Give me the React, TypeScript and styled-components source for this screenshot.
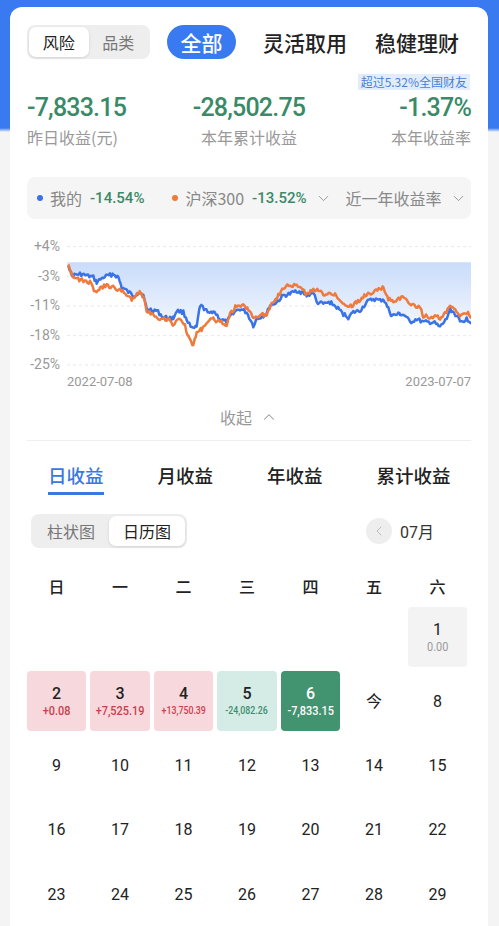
import React from 'react';
import styled, { createGlobalStyle } from 'styled-components';
import { ChevronDown, ChevronUp, ChevronLeft } from 'lucide-react';

const CJK = `"Noto Sans CJK SC", "Noto Sans", sans-serif`;
const NUM = `Roboto, "Noto Sans CJK SC", sans-serif`;
const GREEN = '#3a8a68';
const BLUE = '#3a7af0';

const GlobalStyle = createGlobalStyle`
  html, body {
    margin: 0;
    padding: 0;
  }
  body {
    font-family: ${CJK};
    background: linear-gradient(${BLUE} 0, ${BLUE} 128px, #f4f4f4 132px);
    overflow: hidden;
  }
`;

type Pt = [number, number];

// keypoints traced in chart coordinates (viewBox units, 3x of screen px)
const blueKeys: Pt[] = [
    [205, 315], [215, 350], [240, 345], [280, 355], [290, 370], [310, 355], [340, 345], [355, 355],
    [365, 385], [400, 410], [420, 400], [430, 410], [440, 450], [470, 455], [490, 475], [520, 478],
    [530, 455], [550, 460], [560, 480], [575, 510], [590, 505], [600, 440], [615, 450], [625, 465],
    [640, 455], [660, 480], [680, 490], [700, 460], [720, 450], [740, 460], [760, 500], [770, 480],
    [800, 465], [810, 440], [830, 430], [850, 410], [870, 405], [890, 395], [905, 400], [920, 410],
    [940, 400], [950, 430], [970, 435], [990, 430], [1010, 445], [1030, 465], [1045, 475], [1060, 460],
    [1080, 455], [1100, 430], [1120, 420], [1140, 425], [1150, 420], [1165, 450], [1175, 470],
    [1200, 465], [1215, 470], [1230, 490], [1250, 480], [1270, 490], [1300, 490], [1320, 505],
    [1340, 480], [1350, 450], [1370, 470], [1380, 490], [1400, 480], [1413, 488],
];

const orangeKeys: Pt[] = [
    [205, 312], [215, 345], [230, 360], [250, 365], [270, 370], [290, 405], [300, 385], [320, 380],
    [340, 385], [360, 395], [380, 405], [395, 420], [420, 400], [430, 410], [440, 455], [460, 465],
    [480, 480], [510, 480], [520, 500], [540, 475], [555, 500], [565, 535], [580, 560], [590, 520],
    [605, 510], [620, 490], [640, 480], [660, 490], [680, 495], [690, 465], [710, 440], [730, 440],
    [745, 450], [760, 475], [780, 470], [800, 465], [815, 430], [835, 410], [850, 385], [870, 380],
    [890, 380], [905, 390], [920, 405], [940, 395], [955, 390], [970, 410], [990, 400], [1005, 405],
    [1020, 425], [1040, 440], [1055, 440], [1070, 430], [1085, 420], [1100, 405], [1120, 400],
    [1140, 390], [1150, 385], [1165, 420], [1180, 425], [1210, 415], [1225, 430], [1240, 440],
    [1260, 445], [1270, 470], [1290, 475], [1305, 470], [1320, 480], [1335, 465], [1350, 440],
    [1365, 455], [1380, 470], [1400, 460], [1413, 475],
];

function buildLine(keys: Pt[], seed: number): Pt[] {
    let s = seed;
    const rnd = () => {
        s = (s * 9301 + 49297) % 233280;
        return s / 233280;
    };
    const out: Pt[] = [];
    for (let i = 0; i < keys.length - 1; i++) {
        const [x0, y0] = keys[i];
        const [x1, y1] = keys[i + 1];
        for (let x = x0; x < x1; x += 4) {
            const t = (x - x0) / (x1 - x0);
            const y = y0 + (y1 - y0) * t + (rnd() - 0.5) * 12;
            out.push([x, y]);
        }
    }
    out.push(keys[keys.length - 1]);
    return out;
}

const bluePts = buildLine(blueKeys, 17);
const orangePts = buildLine(orangeKeys, 91);
const toStr = (p: Pt[]) => p.map(([x, y]) => `${x},${y.toFixed(1)}`).join(' ');
const fillStr = `201,310 1413,310 ${toStr([...bluePts].reverse())}`;

const gridYs = [263, 352, 441, 530, 618];
const yLabels = ['+4%', '-3%', '-11%', '-18%', '-25%'];

type Tone = 'none' | 'gray' | 'red' | 'mint' | 'green';
interface Day {
    d: string;
    v?: string;
    tone?: Tone;
    small?: boolean;
}

const weeks: (Day | null)[][] = [
    [null, null, null, null, null, null, { d: '1', v: '0.00', tone: 'gray' }],
    [
        { d: '2', v: '+0.08', tone: 'red' },
        { d: '3', v: '+7,525.19', tone: 'red' },
        { d: '4', v: '+13,750.39', tone: 'red', small: true },
        { d: '5', v: '-24,082.26', tone: 'mint', small: true },
        { d: '6', v: '-7,833.15', tone: 'green' },
        { d: '今' },
        { d: '8' },
    ],
    ['9', '10', '11', '12', '13', '14', '15'].map((d) => ({ d })),
    ['16', '17', '18', '19', '20', '21', '22'].map((d) => ({ d })),
    ['23', '24', '25', '26', '27', '28', '29'].map((d) => ({ d })),
];

export default function App() {
    return (
        <>
            <GlobalStyle />
            <Card>
                <TopRow>
                    <Segment>
                        <SegItem $active>风险</SegItem>
                        <SegItem>品类</SegItem>
                    </Segment>
                    <AllPill>全部</AllPill>
                    <TopTab $gap={27}>灵活取用</TopTab>
                    <TopTab $gap={28}>稳健理财</TopTab>
                </TopRow>

                <BadgeRow>
                    <Badge>超过5.32%全国财友</Badge>
                </BadgeRow>

                <Stats>
                    <Stat $align="left">
                        <StatValue>-7,833.15</StatValue>
                        <StatLabel>昨日收益(元)</StatLabel>
                    </Stat>
                    <Stat $align="center">
                        <StatValue>-28,502.75</StatValue>
                        <StatLabel>本年累计收益</StatLabel>
                    </Stat>
                    <Stat $align="right">
                        <StatValue>-1.37%</StatValue>
                        <StatLabel>本年收益率</StatLabel>
                    </Stat>
                </Stats>

                <Legend>
                    <Dot $color="#3a72e8" />
                    <LegendName>我的</LegendName>
                    <LegendValue>-14.54%</LegendValue>
                    <Dot $color="#f07a3a" style={{ marginLeft: 20 }} />
                    <LegendName>沪深300</LegendName>
                    <LegendValue>-13.52%</LegendValue>
                    <ChevronDown size={17} strokeWidth={1.4} color="#999" />
                    <LegendName style={{ marginLeft: 14 }}>近一年收益率</LegendName>
                    <ChevronDown size={17} strokeWidth={1.4} color="#999" />
                </Legend>

                <ChartRow>
                    <YAxis>
                        {yLabels.map((l) => (
                            <YLabel key={l}>{l}</YLabel>
                        ))}
                    </YAxis>
                    <ChartSvg viewBox="201 219 1212 426" preserveAspectRatio="none">
                        <defs>
                            <linearGradient id="area" x1="0" y1="0" x2="0" y2="1">
                                <stop offset="0%" stopColor="#c9dcfa" />
                                <stop offset="100%" stopColor="#f3f7fe" />
                            </linearGradient>
                        </defs>
                        {gridYs.map((y) => (
                            <line key={y} x1={201} x2={1413} y1={y} y2={y} stroke="#e8e8e8" strokeWidth={3} strokeDasharray="9 9" />
                        ))}
                        <polygon points={fillStr} fill="url(#area)" />
                        <polyline points={toStr(bluePts)} fill="none" stroke="#3a72e8" strokeWidth={7.5} strokeLinejoin="round" />
                        <polyline points={toStr(orangePts)} fill="none" stroke="#ef7a3c" strokeWidth={7.5} strokeLinejoin="round" />
                    </ChartSvg>
                </ChartRow>
                <DateRow>
                    <span>2022-07-08</span>
                    <span>2023-07-07</span>
                </DateRow>

                <Collapse>
                    收起 <ChevronUp size={18} strokeWidth={1.4} color="#999" />
                </Collapse>

                <Divider />

                <Tabs>
                    <Tab $active>日收益</Tab>
                    <Tab>月收益</Tab>
                    <Tab>年收益</Tab>
                    <Tab>累计收益</Tab>
                </Tabs>

                <ToolRow>
                    <ViewSegment>
                        <ViewItem>柱状图</ViewItem>
                        <ViewItem $active>日历图</ViewItem>
                    </ViewSegment>
                    <MonthPicker>
                        <PrevBtn>
                            <ChevronLeft size={16} strokeWidth={1.5} color="#bbb" />
                        </PrevBtn>
                        <MonthText>07月</MonthText>
                    </MonthPicker>
                </ToolRow>

                <WeekHead>
                    {['日', '一', '二', '三', '四', '五', '六'].map((w) => (
                        <span key={w}>{w}</span>
                    ))}
                </WeekHead>

                <Calendar>
                    {weeks.flat().map((day, i) =>
                        day ? (
                            <DayCell key={i} $tone={day.tone || 'none'}>
                                <DayNum $tone={day.tone || 'none'}>{day.d}</DayNum>
                                {day.v && (
                                    <DayValue $tone={day.tone || 'none'} $small={!!day.small}>
                                        {day.v}
                                    </DayValue>
                                )}
                            </DayCell>
                        ) : (
                            <div key={i} />
                        ),
                    )}
                </Calendar>
            </Card>
        </>
    );
}

const Card = styled.div`
    margin: 7px 11px 0 10px;
    padding: 18px 17px 40px;
    background: #fff;
    border-radius: 12px 12px 0 0;
    min-height: 1000px;
`;

const TopRow = styled.div`
    display: flex;
    align-items: center;
    height: 34px;
`;

const Segment = styled.div`
    display: flex;
    width: 123px;
    height: 34px;
    box-sizing: border-box;
    padding: 2px;
    background: #eeeeee;
    border-radius: 8px;
`;

const SegItem = styled.div<{ $active?: boolean }>`
    flex: 1;
    display: flex;
    align-items: center;
    justify-content: center;
    font-size: 16px;
    border-radius: 7px;
    color: ${(p) => (p.$active ? '#222' : '#777')};
    background: ${(p) => (p.$active ? '#fff' : 'transparent')};
    box-shadow: ${(p) => (p.$active ? '0 1px 3px rgba(0,0,0,0.12)' : 'none')};
`;

const AllPill = styled.div`
    margin-left: 17px;
    width: 69px;
    height: 34px;
    border-radius: 17px;
    background: ${BLUE};
    color: #fff;
    font-size: 21px;
    font-weight: 500;
    display: flex;
    align-items: center;
    justify-content: center;
`;

const TopTab = styled.div<{ $gap: number }>`
    margin-left: ${(p) => p.$gap}px;
    font-size: 21px;
    font-weight: 500;
    color: #222;
`;

const BadgeRow = styled.div`
    display: flex;
    justify-content: flex-end;
    margin-top: 15px;
`;

const Badge = styled.div`
    background: #e2edfc;
    color: #4a7fd8;
    font-size: 12px;
    line-height: 16px;
    padding: 0 3px;
    margin-right: 1px;
`;

const Stats = styled.div`
    display: grid;
    grid-template-columns: 1fr 1fr 1fr;
    margin-top: 3px;
`;

const Stat = styled.div<{ $align: 'left' | 'center' | 'right' }>`
    display: flex;
    flex-direction: column;
    align-items: ${(p) => (p.$align === 'left' ? 'flex-start' : p.$align === 'right' ? 'flex-end' : 'center')};
`;

const StatValue = styled.div`
    font-family: ${NUM};
    font-size: 25px;
    font-weight: 500;
    line-height: 30px;
    letter-spacing: -0.8px;
    color: ${GREEN};
`;

const StatLabel = styled.div`
    font-size: 16px;
    line-height: 22px;
    margin-top: 3px;
    color: #999;
`;

const Legend = styled.div`
    margin-top: 29px;
    height: 42px;
    display: flex;
    align-items: center;
    padding-left: 10px;
    background: #f5f5f5;
    border-radius: 8px;
    font-size: 16px;
`;

const Dot = styled.span<{ $color: string }>`
    width: 6px;
    height: 6px;
    border-radius: 50%;
    background: ${(p) => p.$color};
    margin-right: 7px;
`;

const LegendName = styled.span`
    color: #888;
    margin-right: 8px;
`;

const LegendValue = styled.span`
    font-family: ${NUM};
    font-weight: 500;
    font-size: 15px;
    color: ${GREEN};
    margin-right: 8px;
`;

const ChartRow = styled.div`
    display: flex;
    margin-top: 13px;
    height: 142px;
`;

const YAxis = styled.div`
    width: 40px;
    display: flex;
    flex-direction: column;
`;

const YLabel = styled.div`
    height: 29.6px;
    line-height: 29.6px;
    text-align: right;
    padding-right: 7px;
    font-family: ${NUM};
    font-size: 14px;
    color: #999;
`;

const ChartSvg = styled.svg`
    width: 404px;
    height: 142px;
    display: block;
`;

const DateRow = styled.div`
    display: flex;
    justify-content: space-between;
    padding-left: 40px;
    font-family: ${NUM};
    font-size: 13px;
    line-height: 16px;
    color: #999;
`;

const Collapse = styled.div`
    margin-top: 15px;
    display: flex;
    align-items: center;
    justify-content: center;
    gap: 8px;
    font-size: 16px;
    line-height: 24px;
    color: #999;
`;

const Divider = styled.div`
    margin-top: 11px;
    height: 1px;
    background: #efefef;
`;

const Tabs = styled.div`
    display: flex;
    gap: 54px;
    padding-left: 21px;
    margin-top: 23px;
`;

const Tab = styled.div<{ $active?: boolean }>`
    font-size: 18.5px;
    line-height: 22px;
    font-weight: 500;
    color: ${(p) => (p.$active ? '#3a78e0' : '#222')};
    padding-bottom: 6px;
    border-bottom: 3px solid ${(p) => (p.$active ? '#3a78e0' : 'transparent')};
`;

const ToolRow = styled.div`
    display: flex;
    justify-content: space-between;
    align-items: center;
    margin-top: 19px;
    padding-left: 4px;
    padding-right: 37px;
`;

const ViewSegment = styled.div`
    display: flex;
    width: 156px;
    height: 34px;
    box-sizing: border-box;
    padding: 2px;
    background: #eeeeee;
    border-radius: 8px;
`;

const ViewItem = styled.div<{ $active?: boolean }>`
    flex: 1;
    display: flex;
    align-items: center;
    justify-content: center;
    font-size: 16px;
    border-radius: 7px;
    color: ${(p) => (p.$active ? '#222' : '#777')};
    background: ${(p) => (p.$active ? '#fff' : 'transparent')};
    box-shadow: ${(p) => (p.$active ? '0 1px 3px rgba(0,0,0,0.12)' : 'none')};
`;

const MonthPicker = styled.div`
    display: flex;
    align-items: center;
    gap: 8px;
`;

const PrevBtn = styled.div`
    width: 26px;
    height: 26px;
    border-radius: 50%;
    background: #eeeeee;
    display: flex;
    align-items: center;
    justify-content: center;
`;

const MonthText = styled.span`
    font-family: ${NUM};
    font-size: 16px;
    color: #333;
`;

const WeekHead = styled.div`
    width: 440px;
    margin-top: 27px;
    display: grid;
    grid-template-columns: repeat(7, 1fr);
    column-gap: 4.3px;
    text-align: center;
    font-size: 16px;
    line-height: 22px;
    font-weight: 500;
    color: #222;
`;

const Calendar = styled.div`
    width: 440px;
    margin-top: 10px;
    display: grid;
    grid-template-columns: repeat(7, 1fr);
    grid-auto-rows: 60px;
    column-gap: 4.3px;
    row-gap: 4.3px;
`;

const toneBg: Record<Tone, string> = {
    none: 'transparent',
    gray: '#f3f3f3',
    red: '#f7d8dc',
    mint: '#d4ece5',
    green: '#42936f',
};

const toneText: Record<Tone, string> = {
    none: '#222',
    gray: '#999',
    red: '#c8404e',
    mint: '#3e8c6f',
    green: '#fff',
};

const DayCell = styled.div<{ $tone: Tone }>`
    border-radius: 4px;
    background: ${(p) => toneBg[p.$tone]};
    display: flex;
    flex-direction: column;
    align-items: center;
    justify-content: center;
    overflow: hidden;
`;

const DayNum = styled.div<{ $tone: Tone }>`
    font-family: ${NUM};
    font-size: 16px;
    line-height: 19px;
    font-weight: ${(p) => (p.$tone === 'none' || p.$tone === 'gray' ? 400 : 500)};
    color: ${(p) => (p.$tone === 'green' ? '#fff' : '#222')};
`;

const DayValue = styled.div<{ $tone: Tone; $small: boolean }>`
    font-family: ${NUM};
    font-size: ${(p) => (p.$small ? '11px' : '13px')};
    font-weight: ${(p) => (p.$tone === 'gray' ? 400 : 500)};
    line-height: 16px;
    color: ${(p) => toneText[p.$tone]};
    white-space: nowrap;
    transform: scaleX(${(p) => (p.$small ? 0.8 : 0.84)});
`;
